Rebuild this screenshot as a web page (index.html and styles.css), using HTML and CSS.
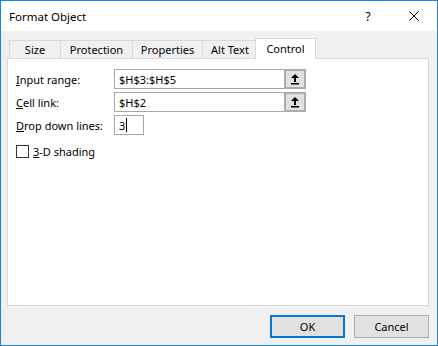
FILE: index.html
```html
<!DOCTYPE html>
<html lang="en">

<head>
    <meta charset="UTF-8">
    <title>Format Object</title>
    <link rel="stylesheet" href="styles.css">
</head>

<body>
    <div class="window">
        <div class="titlebar">
            <div class="title">Format Object</div>
            <div class="title_btn help">?</div>
            <div class="title_btn close">
                <svg width="10" height="10" viewBox="0 0 10 10">
                    <path d="M0.5 0.5 L9.5 9.5 M9.5 0.5 L0.5 9.5" stroke="#000" stroke-width="1" fill="none" />
                </svg>
            </div>
        </div>

        <div class="body">
            <div class="tabs">
                <div class="tab tab_size">Size</div>
                <div class="tab tab_protection">Protection</div>
                <div class="tab tab_properties">Properties</div>
                <div class="tab tab_alt">Alt Text</div>
                <div class="tab tab_control active">Control</div>
            </div>

            <div class="panel">
                <div class="form">
                    <label class="label"><u>I</u>nput range:</label>
                    <div class="field wide">
                        <span class="value">$H$3:$H$5</span>
                        <span class="ref_btn">
                            <svg width="8" height="11" viewBox="0 0 8 11">
                                <path d="M4 0 L8 4 L5 4 L5 8 L3 8 L3 4 L0 4 Z" fill="#000" />
                                <rect x="0" y="9" width="8" height="1.5" fill="#000" />
                            </svg>
                        </span>
                    </div>

                    <label class="label"><u>C</u>ell link:</label>
                    <div class="field wide">
                        <span class="value">$H$2</span>
                        <span class="ref_btn">
                            <svg width="8" height="11" viewBox="0 0 8 11">
                                <path d="M4 0 L8 4 L5 4 L5 8 L3 8 L3 4 L0 4 Z" fill="#000" />
                                <rect x="0" y="9" width="8" height="1.5" fill="#000" />
                            </svg>
                        </span>
                    </div>

                    <label class="label"><u>D</u>rop down lines:</label>
                    <div class="field small">
                        <span class="value">3</span><span class="caret"></span>
                    </div>
                </div>

                <div class="check_row">
                    <span class="checkbox"></span>
                    <span><u>3</u>-D shading</span>
                </div>
            </div>

            <div class="actions">
                <button class="btn default">OK</button>
                <button class="btn">Cancel</button>
            </div>
        </div>
    </div>
</body>

</html>
```

FILE: styles.css
```css
html,
body {
    margin: 0;
    padding: 0;
}

:root {
    --accent: #1883d7;
    --line: #d9d9d9;
}

body {
    font-family: "Noto Sans", "Open Sans", sans-serif;
    font-size: 11px;
    color: #000;
}

.window {
    width: 438px;
    height: 346px;
    box-sizing: border-box;
    border: 1px solid var(--accent);
    background: #f0f0f0;
    display: flex;
    flex-direction: column;
}

.titlebar {
    height: 30px;
    background: #fff;
    display: flex;
    align-items: center;
}

.titlebar .title {
    flex: 1;
    padding-left: 8px;
    font-size: 11.5px;
}

.title_btn {
    width: 46px;
    height: 30px;
    display: flex;
    align-items: center;
    justify-content: center;
}

.title_btn.help {
    font-size: 12px;
}

.body {
    flex: 1;
    padding: 7px 8px 0 6px;
}

.tabs {
    display: flex;
    align-items: flex-end;
    height: 20px;
    padding-left: 2px;
    position: relative;
    z-index: 1;
}

.tab {
    box-sizing: border-box;
    height: 18px;
    border: 1px solid var(--line);
    border-bottom: none;
    margin-left: -1px;
    text-align: center;
    line-height: 17px;
    background: #f0f0f0;
}

.tab:first-child {
    margin-left: 0;
}

.tab_size {
    width: 52px;
}

.tab_protection {
    width: 73px;
}

.tab_properties {
    width: 71px;
}

.tab_alt {
    width: 56px;
}

.tab.active {
    width: 61px;
    height: 21px;
    margin-left: -3px;
    margin-bottom: -1px;
    background: #fff;
    line-height: 19px;
}

.panel {
    box-sizing: border-box;
    height: 248px;
    background: #fff;
    border: 1px solid var(--line);
    padding: 10px 8px 0 8px;
}

.form {
    display: grid;
    grid-template-columns: 98px auto;
    grid-auto-rows: 20px;
    row-gap: 3px;
    align-items: center;
}

.field {
    box-sizing: border-box;
    height: 20px;
    border: 1px solid #a6a6a6;
    display: flex;
    align-items: center;
    padding-left: 4px;
}

.field.wide {
    width: 192px;
}

.field.small {
    width: 30px;
}

.field .value {
    flex: 0 0 auto;
}

.field.wide .value {
    flex: 1;
}

.caret {
    width: 1px;
    height: 14px;
    background: #000;
    margin-left: 1px;
}

.ref_btn {
    box-sizing: border-box;
    width: 22px;
    height: 20px;
    margin: -1px -1px -1px 0;
    border: 2px solid #adadad;
    background: #e1e1e1;
    display: flex;
    align-items: center;
    justify-content: center;
}

.check_row {
    display: flex;
    align-items: center;
    margin-top: 8px;
    height: 16px;
}

.checkbox {
    box-sizing: border-box;
    width: 13px;
    height: 13px;
    border: 1px solid #333;
    background: #fff;
    margin-right: 4px;
}

.actions {
    display: flex;
    justify-content: flex-end;
    gap: 9px;
    margin-top: 9px;
}

.btn {
    box-sizing: border-box;
    width: 75px;
    height: 23px;
    font-family: inherit;
    font-size: 11px;
    color: #000;
    background: #e1e1e1;
    border: 1px solid #adadad;
    padding: 0;
    margin: 0;
}

.btn.default {
    border: 2px solid #0078d7;
}
```
